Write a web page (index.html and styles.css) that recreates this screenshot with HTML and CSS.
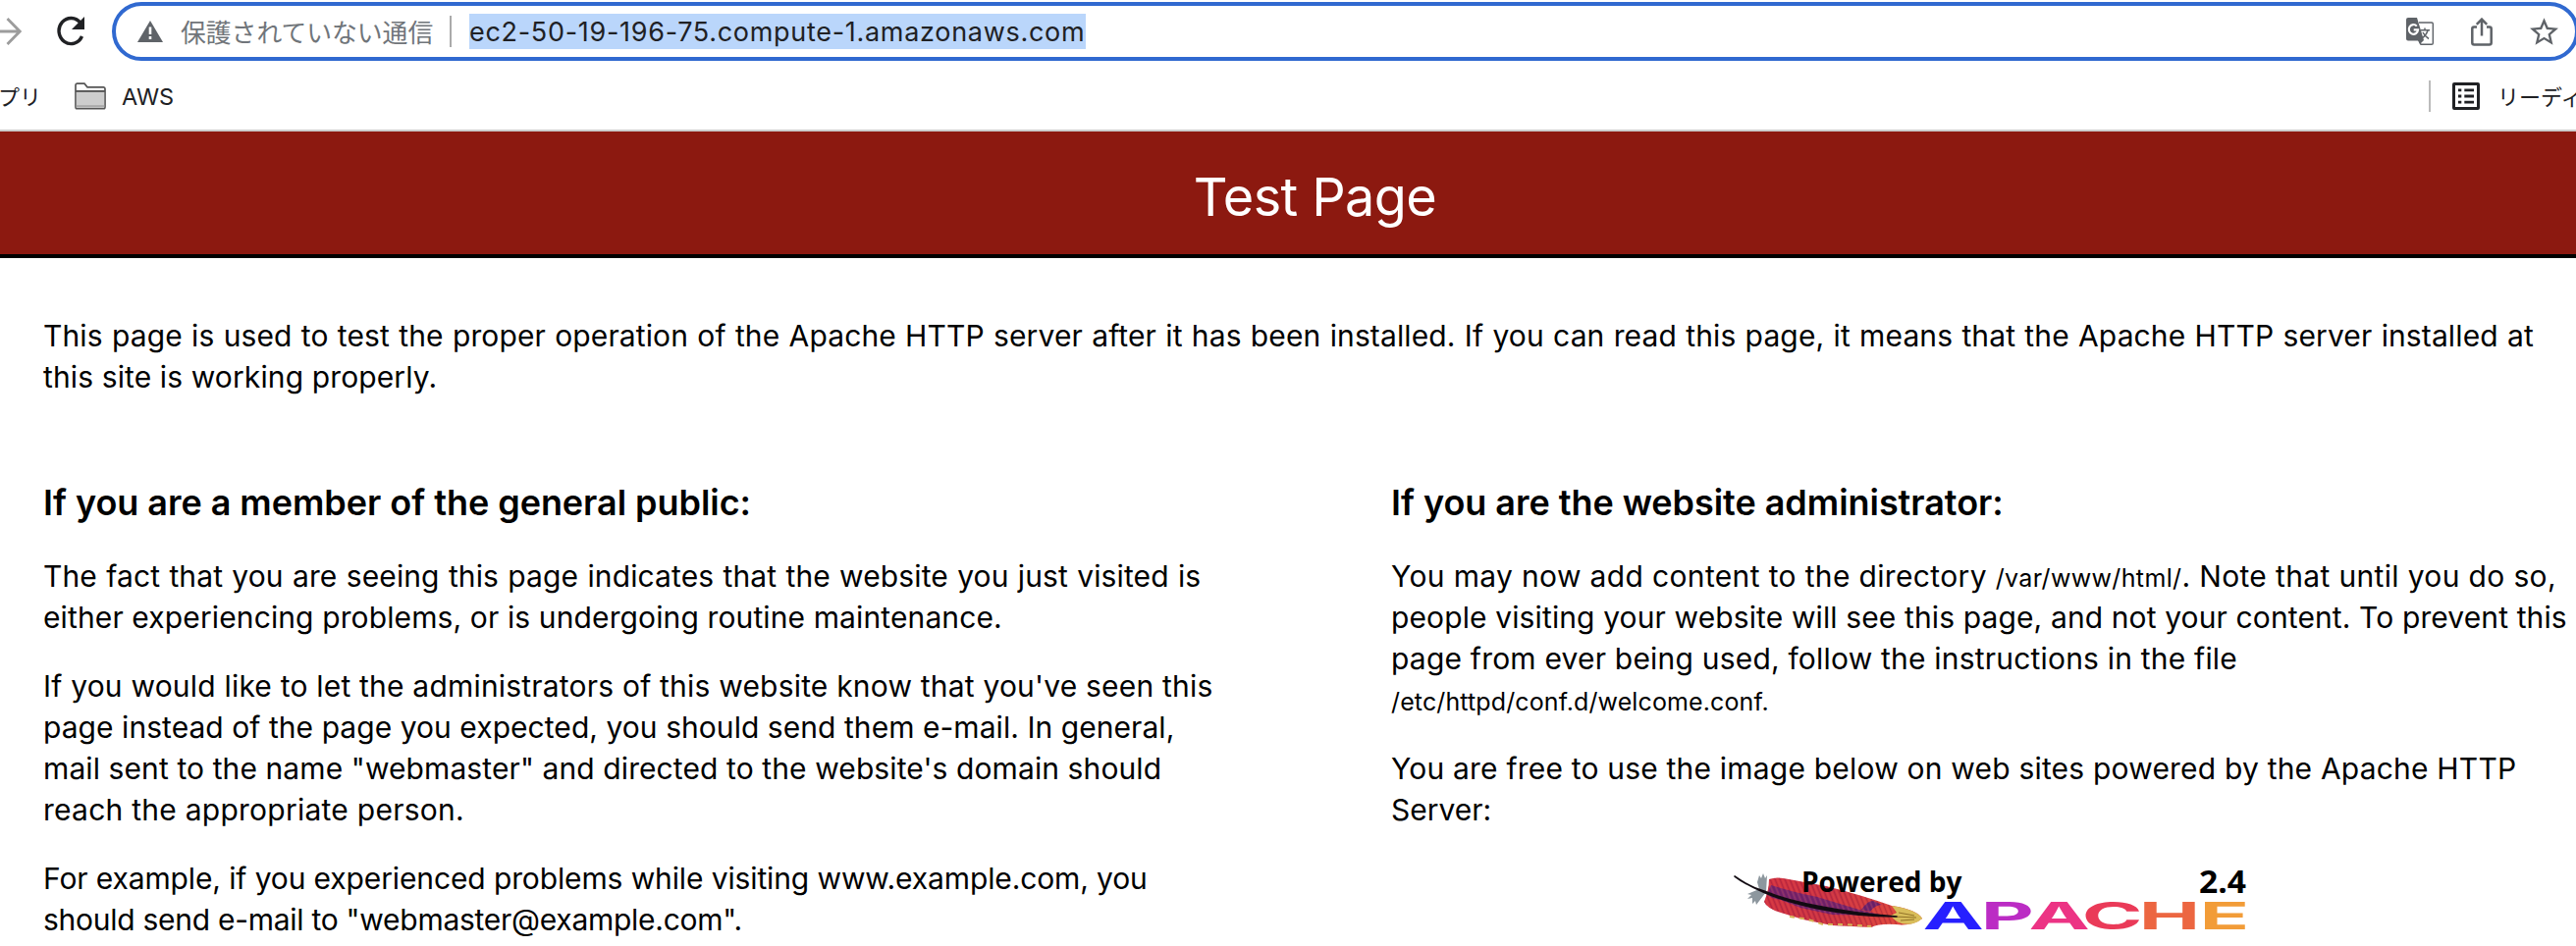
FILE: index.html
```
<!DOCTYPE html>
<html lang="ja">
<head>
<meta charset="utf-8">
<title>Test Page</title>
<link rel="stylesheet" href="styles.css">
</head>
<body>
<div class="toolbar">
  <svg class="forward" width="22" height="30" viewBox="0 0 22 30"><path d="M0 15H20M7.500 2L20.200 15L7.500 28" fill="none" stroke="#9c9c9c" stroke-width="2.800"/></svg>
  <svg class="reload" width="30" height="32" viewBox="0 0 30 32"><path d="M25.500 21A12.300 13 0 1 1 24 7.500" fill="none" stroke="#202124" stroke-width="3.400"/><path d="M28 1V14H15Z" fill="#202124"/></svg>
  <div class="omnibox">
    <svg class="warn" width="26" height="22" viewBox="0 0 26 22"><path d="M13 0L26 22H0Z" fill="#5f6368"/><path d="M13 6.500V14M13 16V19" stroke="#fff" stroke-width="2.600"/></svg>
    <span class="insecure">保護されていない通信</span>
    <span class="sep"></span>
    <span class="url">ec2-50-19-196-75.compute-1.amazonaws.com</span>
    <div class="actions">
      <svg width="28" height="28" viewBox="0 0 28 28"><path d="M13 5H26Q27.300 5 27.300 6.300V26Q27.300 27.300 26 27.300H15L11 20" fill="#fff" stroke="#5f6368" stroke-width="1.400"/><path d="M2 0H11L18 23L14 27L12.500 23.500H2Q0 23.500 0 21.500V2Q0 0 2 0Z" fill="#5f6368"/><path d="M10.800 8.600A4.600 4.900 0 1 0 12 12.300H7.700" fill="none" stroke="#fff" stroke-width="2.200"/><path d="M14.500 12.700H24M19 10.500V12.700M22 13Q20.500 18 15.500 21.500M17 15Q19 19 23 21.500" fill="none" stroke="#5f6368" stroke-width="1.500"/></svg>
      <svg width="22" height="29" viewBox="0 0 22 29"><path d="M6 9.500H3Q1.300 9.500 1.300 11.200V25.500Q1.300 27.500 3.300 27.500H18.700Q20.700 27.500 20.700 25.500V11.200Q20.700 9.500 19 9.500H16M11 18.500V2M5.800 6.800L11 1.600L16.200 6.800" fill="none" stroke="#5f6368" stroke-width="2.500"/></svg>
      <svg width="29" height="28" viewBox="2 2 20 19"><path d="M22 9.240l-7.190-.62L12 2 9.190 8.630 2 9.240l5.460 4.730L5.820 21 12 17.270 18.180 21l-1.630-7.030L22 9.240zM12 15.400l-3.760 2.270 1-4.280-3.320-2.880 4.380-.38L12 6.100l1.710 4.040 4.380.38-3.320 2.880 1 4.280L12 15.400z" fill="#5f6368"/></svg>
    </div>
  </div>
</div>
<div class="bookmarks">
  <span class="apps">プリ</span>
  <svg class="folder" width="32" height="28" viewBox="0 0 32 26" preserveAspectRatio="none"><path d="M1 23V2.500Q1 1 2.500 1H10L13 4.500H29.500Q31 4.500 31 6V23Q31 24.800 29.500 24.800H2.500Q1 24.800 1 23Z" fill="#fff" stroke="#555" stroke-width="1.700"/><path d="M1.800 8.800H30.200V24H1.800Z" fill="#cdcdcd"/><path d="M1.800 22.500H30.200" stroke="#aaa" stroke-width="2"/><path d="M1 8.300H31" stroke="#555" stroke-width="1.800"/></svg>
  <span class="aws">AWS</span>
  <div class="reading">
    <span class="rsep"></span>
    <svg width="28" height="28" viewBox="0 0 28 28"><rect x="1.500" y="1.500" width="25" height="25" rx=".5" fill="none" stroke="#202124" stroke-width="3"/><path d="M6 7.800H9.300M6 14H9.300M6 20.200H9.300M12.300 7.800H22M12.300 14H22M12.300 20.200H22" stroke="#202124" stroke-width="2.800"/></svg>
    <span class="rtext">リーディ</span>
  </div>
</div>
<header class="banner"><h1>Test Page</h1></header>
<main class="content">
  <p class="intro"><span class="t12 wide">This page is used to test the proper operation of the Apache HTTP server after it has been installed. If you can read this page, it means that the Apache HTTP server installed at</span><br><span class="t12">this site is working properly.</span></p>
  <div class="columns">
    <section>
      <h2>If you are a member of the general public:</h2>
      <p><span class="t12 wide">The fact that you are seeing this page indicates that the website you just visited is</span><br><span class="t12">either experiencing problems, or is undergoing routine maintenance.</span></p>
      <p><span class="t20">If you would like to let the administrators of this website know that you've seen this</span><br><span class="t5">page instead of the page you expected, you should send them e-mail. In general,</span><br><span class="t10">mail sent to the name "webmaster" and directed to the website's domain should</span><br><span class="t25">reach the appropriate person.</span></p>
      <p><span class="n12">For example, if you experienced problems while visiting www.example.com, you</span><br><span class="n27">should send e-mail to "webmaster@example.com".</span></p>
    </section>
    <section>
      <h2>If you are the website administrator:</h2>
      <p><span class="t36">You may now add content to the directory <code>/var/www/html/</code>. Note that until you do so,</span><br><span class="t12">people visiting your website will see this page, and not your content. To prevent this</span><br><span class="t20">page from ever being used, follow the instructions in the file</span><br><code class="conf">/etc/httpd/conf.d/welcome.conf.</code></p>
      <p><span class="t20">You are free to use the image below on web sites powered by the Apache HTTP</span><br>Server:</p>
      <svg class="logo" width="524" height="68" viewBox="0 0 524 68">
        <defs>
          <linearGradient id="vane" x1="0" y1="0" x2="1" y2=".15"><stop offset="0" stop-color="#d02e40"/><stop offset=".45" stop-color="#c82e42"/><stop offset="1" stop-color="#dc443a"/></linearGradient>
          <pattern id="barbs" width="5" height="60" patternUnits="userSpaceOnUse" patternTransform="skewX(22)"><path d="M1 0V60" stroke="#f0604c" stroke-width="1.200" opacity=".4"/><path d="M3.500 0V60" stroke="#7c1838" stroke-width="1" opacity=".35"/></pattern>
          <path id="feather" d="M36 9Q44 6 56 9L94 16Q130 25 161 36Q187 40 192 49Q182 57 165 55Q148 54 140 58L121 57L100 56L71 50L48 43Q34 39 31 32Q36 20 36 9Z"/>
        </defs>
        <path d="M26 5L28 8L30 3L32 8L34 5L33 22L23 35L22 31L19 34L19 28L14 29L18 25L14 24L26 19L24 12Z" fill="#8d979e"/>
        <use href="#feather" fill="url(#vane)"/>
        <path d="M38 15Q60 22 85 27L128 40L153 46L100 45L68 38L48 30Q36 28 34 24Z" fill="#5e2079" opacity=".85"/>
        <path d="M130 40Q136 31 142 31L151 35Q144 35 139 42Z" fill="#652070"/>
        <use href="#feather" fill="url(#barbs)"/>
        <path d="M57 47L76 50L91 55L113 55L140 57" fill="none" stroke="#d5b356" stroke-width="2" stroke-dasharray="5 5"/>
        <path d="M161 36Q187 40 192 49Q183 57 171 54Q164 52 160 46L166 43Z" fill="#d8bd5a"/>
        <path d="M162 47L186 48M168 43L184 46M170 51L184 50" fill="none" stroke="#927328" stroke-width="1"/>
        <path d="M1 6Q14 16 31 21Q55 31 90 37Q125 44 166 47Q125 47 86 39Q50 31 30 22Q12 14 1 6Z" fill="#120b12" stroke="#120b12" stroke-width="1.600" stroke-linejoin="round"/>
        <text class="lbl" x="69" y="22">Powered by</text>
        <text class="lbl ver" x="474" y="23" textLength="48" lengthAdjust="spacingAndGlyphs">2.4</text>
        <text class="word" transform="scale(2.2 1)" y="60"><tspan x="87.500" fill="#261fff">A</tspan><tspan x="114.400" fill="#bb2cc4">P</tspan><tspan x="136.600" fill="#ec3384">A</tspan><tspan x="161.300" fill="#ea3a58">C</tspan><tspan x="187.600" fill="#ec6641">H</tspan><tspan x="215.700" fill="#f29c38">E</tspan></text>
      </svg>
    </section>
  </div>
</main>
</body>
</html>
```
FILE: styles.css
```
* { box-sizing: border-box; }
html, body { margin: 0; height: 964px; overflow: hidden; background: #fff; }
body { font-family: Inter, "Noto Sans CJK JP", sans-serif; color: #000; }
svg { display: block; flex: none; }
.toolbar { height: 64px; padding-top: 2px; display: flex; align-items: flex-start; }
.forward { margin-top: 15px; }
.reload { margin: 14px 0 0 36px; }
.omnibox { flex: none; width: 2513px; height: 60px; margin-left: 26px; border: 4px solid #3069d0; border-radius: 30px; display: flex; align-items: center; }
.warn { margin-left: 22px; }
.insecure { margin: 0 0 2px 18px; width: 262px; font-size: 25.8px; color: #70757a; white-space: nowrap; }
.sep { width: 2px; height: 32px; background: #aaa; margin-left: 12px; }
.url { margin-left: 18px; height: 36px; line-height: 37px; background: #bad6fb; font-size: 27px; letter-spacing: .7px; color: #202124; white-space: nowrap; width: 628px; }
.actions { margin-left: auto; margin-right: 17px; display: flex; gap: 38px; align-items: center; }
.bookmarks { height: 70px; border-bottom: 2px solid #ccc; display: flex; align-items: center; font-size: 24px; color: #202124; white-space: nowrap; }
.apps { width: 43px; margin-left: -2px; font-size: 22px; padding-bottom: 2px; }
.folder { margin-left: 35px; }
.aws { margin-left: 16px; font-size: 23.5px; padding-top: 1px; }
.reading { margin-left: auto; display: flex; align-items: center; width: 150px; }
.rsep { flex: none; width: 2px; height: 32px; background: #bbb; }
.reading svg { margin-left: 22px; }
.rtext { margin-left: 18px; font-size: 22px; padding-bottom: 2px; }
.banner { height: 129px; background: #8c1910; border-bottom: 4px solid #000; color: #fff; width: 2679px; text-align: center; }
h1 { margin: 0; font-size: 54px; font-weight: 400; line-height: 134px; letter-spacing: -.6px; }
.content { width: 2679px; padding: 58px 44px 0; font-size: 30px; line-height: 42px; white-space: nowrap; }
p { margin: 0 0 28px; }
.intro { margin-bottom: 82px; }
.columns { display: grid; grid-template-columns: 1373px 1fr; }
h2 { margin: 0 0 29px; font-size: 36px; line-height: 50px; font-weight: 600; letter-spacing: -.04px; }
code { font-family: Inter, sans-serif; font-size: 25px; line-height: 0; }
.conf { letter-spacing: .12px; }
.t5 { letter-spacing: .05px; }
.t10 { letter-spacing: .1px; }
.t12 { letter-spacing: .12px; }
.t20 { letter-spacing: .2px; }
.t25 { letter-spacing: .25px; }
.t36 { letter-spacing: .35px; }
.n12 { letter-spacing: -.12px; }
.n27 { letter-spacing: -.27px; }
.wide { word-spacing: .7px; }
.logo { margin: 41px 0 0 349px; }
.lbl { font: 700 28px "Open Sans", "Noto Sans", sans-serif; }
.ver { font-size: 32px; }
.word { font: 700 38px Inter, sans-serif; }
```
